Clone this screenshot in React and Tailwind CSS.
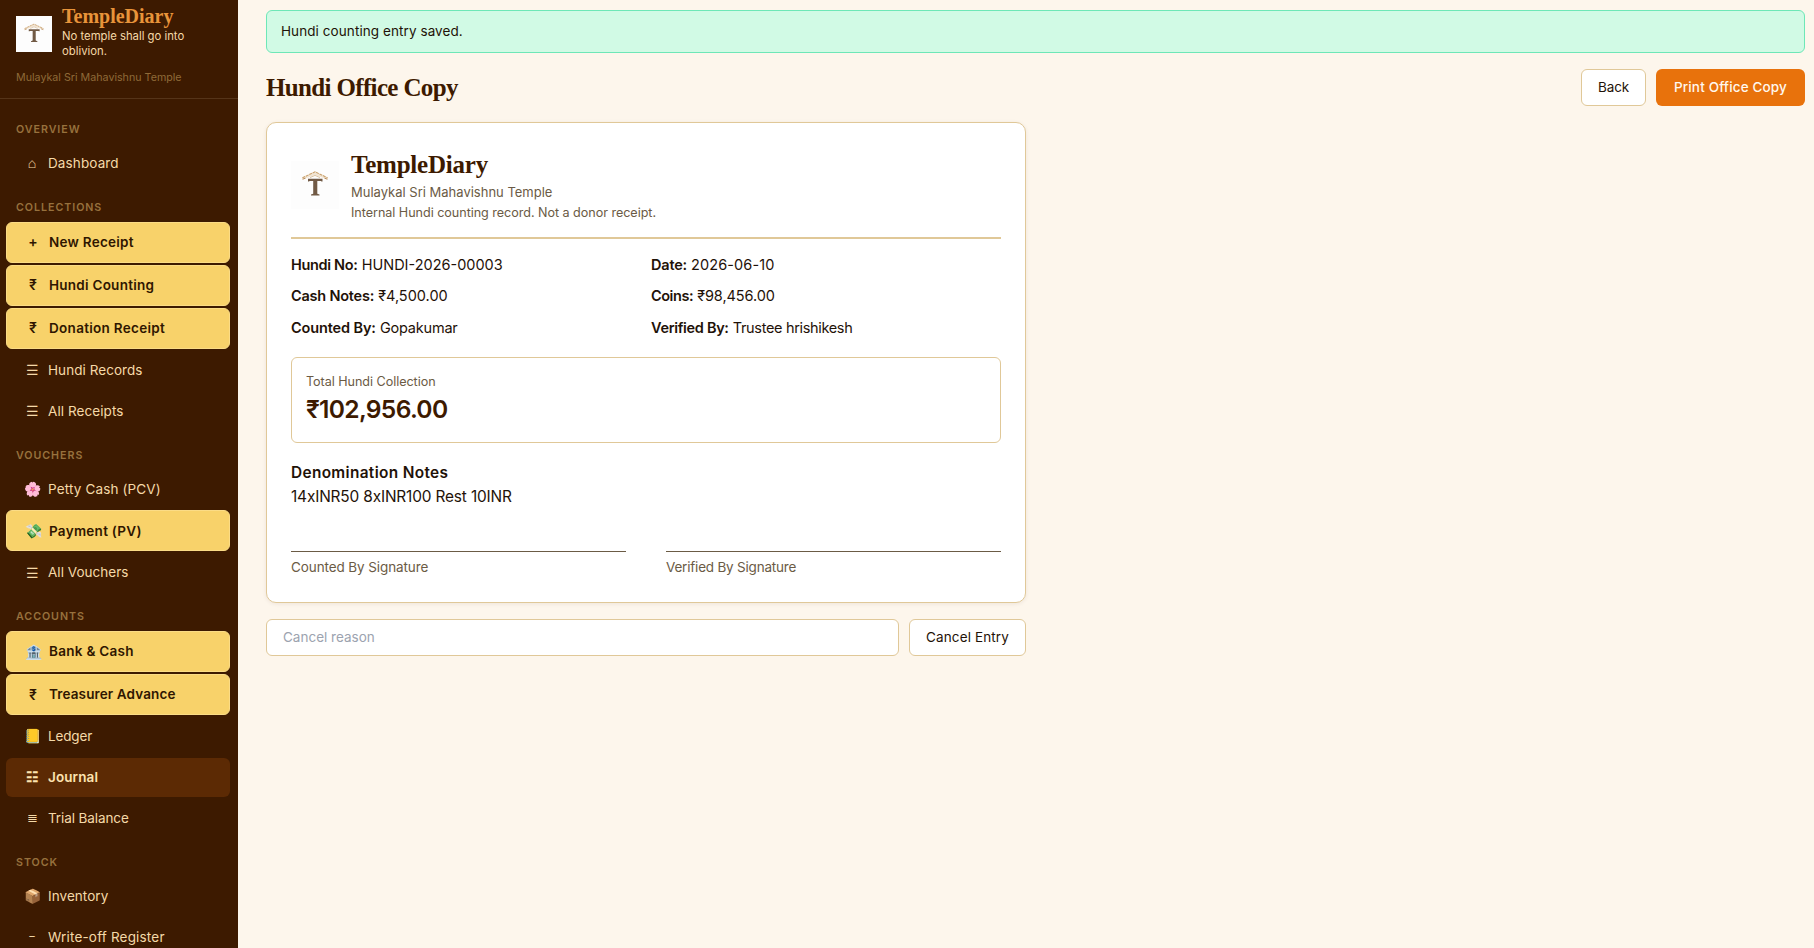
const sections = [
  {
    title: "OVERVIEW",
    items: [{ icon: "⌂", label: "Dashboard", track: "tracking-[0.12px]" }],
  },
  {
    title: "COLLECTIONS",
    items: [
      { icon: "+", label: "New Receipt", kind: "accent", track: "tracking-[0.25px]" },
      { icon: "₹", label: "Hundi Counting", kind: "accent", track: "tracking-[0.25px]" },
      { icon: "₹", label: "Donation Receipt", kind: "accent", track: "tracking-[0.3px]" },
      { icon: "☰", label: "Hundi Records", track: "tracking-[0.06px]" },
      { icon: "☰", label: "All Receipts", track: "tracking-[0.08px]" },
    ],
  },
  {
    title: "VOUCHERS",
    items: [
      { icon: "🌸", label: "Petty Cash (PCV)", track: "tracking-[0.14px]" },
      { icon: "💸", label: "Payment (PV)", kind: "accent", track: "tracking-[0.28px]" },
      { icon: "☰", label: "All Vouchers", track: "tracking-[0.03px]" },
    ],
  },
  {
    title: "ACCOUNTS",
    items: [
      { icon: "🏦", label: "Bank & Cash", kind: "accent", track: "tracking-[0.28px]" },
      { icon: "₹", label: "Treasurer Advance", kind: "accent", track: "tracking-[0.13px]" },
      { icon: "📒", label: "Ledger", track: "tracking-[-0.15px]" },
      { icon: "☷", label: "Journal", kind: "active", track: "tracking-[0.1px]" },
      { icon: "≣", iconSize: "text-[13px]", label: "Trial Balance", track: "tracking-[-0.1px]" },
    ],
  },
  {
    title: "STOCK",
    items: [
      { icon: "📦", label: "Inventory", track: "tracking-[0.06px]" },
      { icon: "–", iconSize: "text-[11px]", label: "Write-off Register", track: "tracking-[0.18px]" },
    ],
  },
];

const kinds = {
  accent: "h-[41px] border border-[#fbdc86] bg-[#f8d26a] font-semibold text-[#2f1600]",
  active: "h-[38.75px] bg-[#5c2a04] font-semibold text-[#fde3b0]",
  plain: "h-[38.75px] text-[#f5d9a8]",
};

function Logo({ className }) {
  return (
    <svg viewBox="0 0 48 48" className={className}>
      <rect width="48" height="48" fill="#fdfdfd" />
      <path d="M11 17 L24 10.6 L37 17 L36.4 18.4 L24 14 L11.6 18.4 Z" fill="#f1e4d2" />
      <path d="M11.4 16.8 L24 10.8 L36.6 16.8" fill="none" stroke="#c9a06c" strokeWidth="1.1" strokeDasharray="3 0.8" />
      <path d="M11.6 18.2 L14.5 17.2 M33.5 17.2 L36.4 18.2" fill="none" stroke="#b98d5c" strokeWidth="1" />
      <path d="M19 16.6 L24 14.4 L29 16.6" fill="none" stroke="#d3b68e" strokeWidth="0.8" />
      <path d="M17 17.8 H31.5 V20.4 H30.4 L30 19.9 H26.3 V32.8 L28.5 33.6 V34.6 H20 V33.6 L22.2 32.8 V19.9 H18.5 L18.1 20.4 H17 Z" fill="#715a45" />
    </svg>
  );
}

function NavItem({ icon, label, kind = "plain", track = "", iconSize = "text-[14px]" }) {
  return (
    <div className={`mb-[2px] flex shrink-0 items-center gap-1.5 rounded-md px-4 text-[13.5px] ${kinds[kind]}`}>
      <span className={`flex w-5 shrink-0 justify-center leading-none ${iconSize}`}>{icon}</span>
      <span className={`whitespace-nowrap ${track}`}>{label}</span>
    </div>
  );
}

function Sidebar() {
  return (
    <aside className="flex h-full w-[238px] shrink-0 flex-col overflow-hidden bg-[#3d1a00]">
      <div className="h-[98.5px] shrink-0 border-b border-[#553419] px-4 pt-[5px]">
        <div className="flex items-center gap-2.5">
          <Logo className="mt-[3px] size-9 shrink-0" />
          <div>
            <div className="font-['Liberation_Serif',serif] text-[20px] leading-[22px] font-bold text-[#e8943a]">
              TempleDiary
            </div>
            <div className="w-[140px] pt-0.5 text-[11.3px] leading-[15px] text-[#f5d9a8]">
              No temple shall go into oblivion.
            </div>
          </div>
        </div>
        <div className="mt-[11px] text-[10.7px] leading-4 whitespace-nowrap text-[#8f6a38]">
          Mulaykal Sri Mahavishnu Temple
        </div>
      </div>
      <nav className="flex flex-col pt-[8.1px] pr-2 pl-1.5">
        {sections.map((s) => (
          <div key={s.title} className="flex flex-col">
            <div className="h-[37.2px] shrink-0 pt-[15.3px] pl-2.5 text-[10.7px] leading-4 font-semibold tracking-[0.95px] text-[#97713d]">
              {s.title}
            </div>
            {s.items.map((i) => (
              <NavItem key={i.label} {...i} />
            ))}
          </div>
        ))}
      </nav>
    </aside>
  );
}

function Field({ label, value, labelTrack, valueTrack = "" }) {
  return (
    <div className="h-[22px] text-[14.5px] leading-[22px] whitespace-nowrap">
      <span className={`font-semibold ${labelTrack}`}>{label}</span>{" "}
      <span className={valueTrack}>{value}</span>
    </div>
  );
}

export default function App() {
  return (
    <div className="flex h-[948px] w-full overflow-hidden bg-[#fdf6ec] font-['Inter',sans-serif] text-[#1f1208]">
      <Sidebar />
      <main className="flex min-w-0 flex-1 flex-col pt-2.5 pr-[9px] pl-7">
        <div className="flex h-[43px] items-center rounded-md border border-[#6ee7b7] bg-[#d1fae5] px-3.5 text-[13.5px] tracking-[0.08px]">
          Hundi counting entry saved.
        </div>

        <header className="mt-4 flex h-[37px] items-center justify-between">
          <h1 className="font-['Liberation_Serif',serif] text-[25px] font-bold tracking-[-0.65px] text-[#3d1a00]">
            Hundi Office Copy
          </h1>
          <div className="flex h-full gap-2.5 text-[13.5px]">
            <button className="w-[65px] rounded-md border border-[#e0c898] bg-white tracking-[-0.1px]">Back</button>
            <button className="w-[149px] rounded-md bg-[#e8720c] font-medium tracking-[0.15px] text-[#fff8ef]">
              Print Office Copy
            </button>
          </div>
        </header>

        <section className="mt-4 h-[481px] w-[760px] rounded-[10px] border border-[#e0c898] bg-white px-6 pt-6 shadow-[0_1px_4px_rgba(61,26,0,0.08)]">
          <div className="flex h-[92px] items-center gap-3 border-b-2 border-[#e0c898] pb-[14px]">
            <Logo className="size-12 shrink-0" />
            <div className="whitespace-nowrap text-[#6b5b45]">
              <div className="font-['Liberation_Serif',serif] text-[25px] leading-[34px] font-bold tracking-[-0.22px] text-[#3d1a00]">
                TempleDiary
              </div>
              <div className="text-[13px] leading-5">Mulaykal Sri Mahavishnu Temple</div>
              <div className="-mb-px pt-px text-[12.6px] leading-5 tracking-[-0.04px]">
                Internal Hundi counting record. Not a donor receipt.
              </div>
            </div>
          </div>

          <div className="mt-[15px] grid grid-cols-2 gap-x-2.5 gap-y-[9.4px]">
            <Field label="Hundi No:" value="HUNDI-2026-00003" labelTrack="tracking-[-0.33px]" />
            <Field label="Date:" value="2026-06-10" labelTrack="tracking-[-0.2px]" valueTrack="tracking-[0.1px]" />
            <Field label="Cash Notes:" value="₹4,500.00" labelTrack="tracking-[-0.22px]" />
            <Field label="Coins:" value="₹98,456.00" labelTrack="tracking-[-0.45px]" valueTrack="tracking-[-0.08px]" />
            <Field label="Counted By:" value="Gopakumar" labelTrack="tracking-[-0.13px]" valueTrack="tracking-[-0.2px]" />
            <Field
              label="Verified By:"
              value="Trustee hrishikesh"
              labelTrack="tracking-[-0.32px]"
              valueTrack="tracking-[-0.33px]"
            />
          </div>

          <div className="mt-[18.2px] h-[86px] rounded-md border border-[#e0c898] px-3.5 pt-[14px]">
            <div className="text-[12.6px] leading-5 tracking-[-0.05px] text-[#6b5b45]">Total Hundi Collection</div>
            <div className="text-[24.6px] leading-[34px] font-semibold tracking-[-0.7px] text-[#3d1a00]">₹102,956.00</div>
          </div>

          <div className="mt-[18px] text-[15.4px] leading-6 font-semibold tracking-[0.34px]">Denomination Notes</div>
          <div className="text-[15.4px] leading-6 tracking-[-0.15px]">14xINR50 8xINR100 Rest 10INR</div>

          <div className="mt-[42.2px] grid grid-cols-2 gap-x-10 text-[13.5px] leading-5 text-[#6b5b45]">
            <div className="border-t border-[#6b5b45] pt-[5px] tracking-[-0.1px]">Counted By Signature</div>
            <div className="border-t border-[#6b5b45] pt-[5px] tracking-[-0.2px]">Verified By Signature</div>
          </div>
        </section>

        <div className="mt-4 flex h-[37px] w-[760px] gap-2.5 text-[13.5px]">
          <input
            placeholder="Cancel reason"
            className="min-w-0 flex-1 rounded-md border border-[#e0c898] bg-white px-4 placeholder:text-[#9ca3af]"
          />
          <button className="w-[117px] rounded-md border border-[#e0c898] bg-white tracking-[0.12px]">Cancel Entry</button>
        </div>
      </main>
    </div>
  );
}
